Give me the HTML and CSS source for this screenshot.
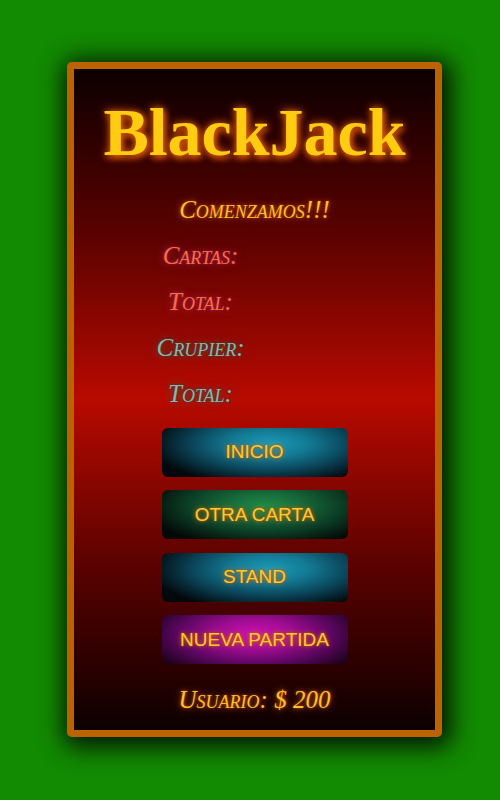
FILE: index.html
```html
<!DOCTYPE html>
<html lang="es">
<head>
<meta charset="utf-8">
<title>BlackJack</title>
<link rel="stylesheet" href="styles.css">
</head>
<body>
<main class="table">
  <h1 class="title">BlackJack</h1>
  <p class="status">Comenzamos!!!</p>
  <div class="stats">
    <span class="label player">Cartas:</span><span class="value"></span>
    <span class="label player">Total:</span><span class="value"></span>
    <span class="label dealer">Crupier:</span><span class="value"></span>
    <span class="label dealer">Total:</span><span class="value"></span>
  </div>
  <div class="actions">
    <button class="btn btn-blue">INICIO</button>
    <button class="btn btn-green">OTRA CARTA</button>
    <button class="btn btn-blue">STAND</button>
    <button class="btn btn-pink">NUEVA PARTIDA</button>
  </div>
  <p class="wallet">Usuario: $ 200</p>
</main>
</body>
</html>
```
FILE: styles.css
```css
html, body {
  margin: 0;
  padding: 0;
}
body {
  background: #128a02;
  width: 500px;
  height: 800px;
  overflow: hidden;
  padding-top: 62px;
  box-sizing: border-box;
}
.table {
  margin-left: 67px;
  width: 375px;
  height: 675px;
  box-sizing: border-box;
  border: 7px solid #bd6200;
  border-radius: 5px;
  background: linear-gradient(to bottom, #0c0000 0%, #5a0200 25%, #b80a00 50%, #5a0200 75%, #0c0000 100%);
  box-shadow: 3px 4px 24px 6px rgba(0, 0, 0, 0.85);
  padding-top: 24px;
  display: flex;
  flex-direction: column;
  align-items: center;
  font-family: "Liberation Serif", "DejaVu Serif", serif;
}
.title {
  margin: 0;
  font-size: 68px;
  line-height: 78px;
  font-weight: bold;
  color: #ffcc11;
  text-shadow: 2px 3px 6px #d05000, 0 0 8px #ff7000;
}
.status, .wallet {
  margin: 23.6px 0 0;
  font-size: 25px;
  line-height: 30px;
  font-style: italic;
  font-variant: small-caps;
  color: #ffbf2a;
  text-shadow: 0 0 7px #c05800, 0 0 3px #a04000;
}
.wallet {
  margin-top: 20.5px;
}
.stats {
  margin-top: 8px;
  width: 216px;
  display: grid;
  grid-template-columns: 1fr 1fr;
  grid-auto-rows: 46px;
}
.label {
  font-size: 25px;
  line-height: 46px;
  font-style: italic;
  font-variant: small-caps;
  text-align: center;
  white-space: nowrap;
}
.player {
  color: #ff6a42;
  text-shadow: 0 0 9px #a8305e, 0 0 3px #902040;
}
.dealer {
  color: #8fb6b2;
  text-shadow: 0 0 9px #3a6a50, 0 0 2px #204030;
}
.actions {
  margin-top: 11.4px;
  display: flex;
  flex-direction: column;
  gap: 13.5px;
}
.btn {
  width: 186px;
  height: 49px;
  border: none;
  border-radius: 6px;
  font-family: "Liberation Sans", Arial, sans-serif;
  font-size: 19px;
  color: #ffc933;
  text-shadow: 0 0 5px #e07000, 0 0 2px #a05000;
  padding: 0;
}
.btn-blue {
  background: radial-gradient(ellipse 65% 85% at 58% 32%, #1a9ab8 0%, #137a94 32%, #0a4458 65%, #02080b 100%);
}
.btn-green {
  background: radial-gradient(ellipse 65% 85% at 55% 32%, #1f8a48 0%, #17683a 32%, #0b3c24 65%, #020806 100%);
}
.btn-pink {
  background: radial-gradient(ellipse 65% 95% at 50% 40%, #cc10b4 0%, #a00c92 32%, #58065e 65%, #12020e 100%);
}
```
